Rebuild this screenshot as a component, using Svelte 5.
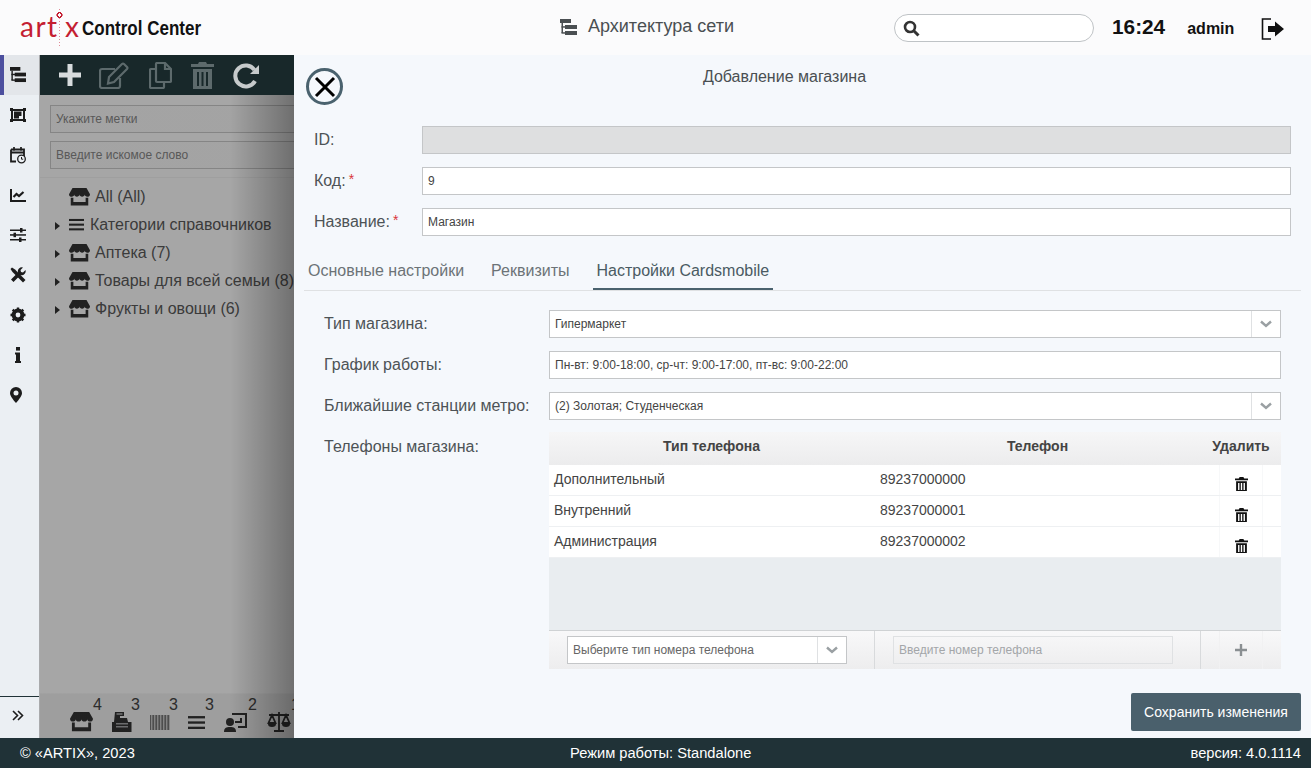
<script>
	const phones = [
		{ type: 'Дополнительный', number: '89237000000' },
		{ type: 'Внутренний', number: '89237000001' },
		{ type: 'Администрация', number: '89237000002' }
	];
	const tree = [
		{ label: 'Категории справочников', icon: 'list' },
		{ label: 'Аптека (7)', icon: 'store' },
		{ label: 'Товары для всей семьи (8)', icon: 'store' },
		{ label: 'Фрукты и овощи (6)', icon: 'store' }
	];
</script>

{#snippet store(w)}
	<svg class="ico" width={w} viewBox="0 0 24 20" fill="currentColor">
		<path d="M4 0h16l4 7c0 2-1.500 3-3 3s-3-1-3-2.500C18 9 16.500 10 15 10s-3-1-3-2.500C12 9 10.500 10 9 10S6 9 6 7.500C6 9 4.500 10 3 10S0 9 0 7z" />
		<path d="M2 11h3v5h14v-5h3v9H2z" />
	</svg>
{/snippet}

{#snippet bars(w)}
	<svg class="ico" width={w} viewBox="0 0 16 14" fill="currentColor">
		<rect y="1" width="16" height="2.200" /><rect y="6" width="16" height="2.200" /><rect y="11" width="16" height="2.200" />
	</svg>
{/snippet}

{#snippet trash(w)}
	<svg class="ico" width={w} viewBox="0 0 14 16" fill="currentColor">
		<path d="M5 0h4l1 1.500h4V3.500H0V1.500h4z" />
		<path d="M1.200 4.500h11.600V16H1.200zM3.300 6.500v7.500h1.500V6.500zM6.250 6.500v7.500h1.500V6.500zM9.200 6.500v7.500h1.500V6.500z" fill-rule="evenodd" />
	</svg>
{/snippet}

{#snippet chevron()}
	<svg width="12" height="8" viewBox="0 0 12 8" fill="none" stroke="#9aa0a3" stroke-width="2.400"><path d="M1 1.500l5 4.500 5-4.500" /></svg>
{/snippet}

{#snippet arch(w)}
	<svg class="ico" width={w} viewBox="0 0 17 16" fill="currentColor">
		<rect x="0" y="0" width="11" height="4" /><rect x="5" y="6" width="12" height="4" /><rect x="5" y="12" width="12" height="4" />
		<rect x="1.500" y="4" width="1.500" height="10" /><rect x="1.500" y="7.200" width="4" height="1.500" /><rect x="1.500" y="13.200" width="4" height="1.500" />
	</svg>
{/snippet}

<div class="app">
	<header class="topbar">
		<div class="brand">
			<div class="logo">
				<span class="logo-art">art</span>
				<span class="logo-i"></span>
				<span class="logo-x">x</span>
			</div>
			<div class="brand-name">Control Center</div>
		</div>
		<div class="page-title">
			{@render arch(17)}
			<span>Архитектура сети</span>
		</div>
		<div class="top-right">
			<div class="search">
				<svg width="17" height="17" viewBox="0 0 17 17" fill="none" stroke="#333" stroke-width="2.600"><circle cx="7" cy="7" r="5" /><path d="M10.500 10.500l5 5" stroke-width="3" /></svg>
			</div>
			<div class="clock">16:24</div>
			<div class="user">admin</div>
			<svg class="logout" width="24" height="22" viewBox="0 0 24 22"><path d="M10 1H1.500v20H10" fill="none" stroke="#111" stroke-width="1.600" /><path d="M7 8h7V3.500l9 7.500-9 7.500V14H7z" fill="#111" /></svg>
		</div>
	</header>

	<div class="middle">
		<nav class="sidebar">
			<div class="nav-item active">{@render arch(16)}</div>
			<div class="nav-item">
				<svg width="16" height="14" viewBox="0 0 16 14" fill="#1c1c1c"><path d="M0 0h3v1h10V0h3v3h-1v8h1v3h-3v-1H3v1H0v-3h1V3H0zM3 3v8h10V3zM4 3.500h7.500V8H9v2.500H4z" fill-rule="evenodd" /></svg>
			</div>
			<div class="nav-item">
				<svg width="16" height="17" viewBox="0 0 16 17" fill="none" stroke="#1c1c1c"><path d="M1 5.500h13M1 2.500h13v7M6 14.500H1V2.500" stroke-width="1.800" /><path d="M4 0v3.500M11 0v3.500" stroke-width="1.700" /><circle cx="11.500" cy="12" r="3.800" fill="#ebeff3" stroke-width="1.300" /><path d="M11.500 10v2.200h1.700" stroke-width="1" /></svg>
			</div>
			<div class="nav-item">
				<svg width="16" height="13" viewBox="0 0 16 13" fill="none" stroke="#1c1c1c" stroke-width="2"><path d="M1 0v12h15" /><path d="M3.500 8l3-3 2.500 2 4.500-4" stroke-width="2.200" /></svg>
			</div>
			<div class="nav-item">
				<svg width="16" height="14" viewBox="0 0 16 14" fill="#1c1c1c"><rect y="1.500" width="16" height="1.500" /><rect y="6.200" width="16" height="1.500" /><rect y="11" width="16" height="1.500" /><rect x="10" width="2.500" height="4.500" /><rect x="3.500" y="4.700" width="2.500" height="4.500" /><rect x="9" y="9.500" width="2.500" height="4.500" /></svg>
			</div>
			<div class="nav-item">
				<svg width="16" height="16" viewBox="0 0 16 16" fill="#1c1c1c"><path d="M0.500 2L2 0.500l3 2 8 8 2.500 2.500-2.500 2.500-2.500-2.500-8-8z" /><path d="M1 12.500L8 5.500a4 4 0 0 1 1-4 4 4 0 0 1 4-1l-2.500 2.500 0.500 2 2 0.500L15.500 3a4 4 0 0 1-1 4 4 4 0 0 1-4 1L3.500 15z" /></svg>
			</div>
			<div class="nav-item">
				<svg width="16" height="16" viewBox="0 0 16 16"><circle cx="8" cy="8" r="4.800" fill="none" stroke="#1c1c1c" stroke-width="3.200" /><path d="M8 0.500v15M0.500 8h15M2.700 2.700l10.600 10.600M13.300 2.700L2.700 13.300" stroke="#1c1c1c" stroke-width="2.400" /><circle cx="8" cy="8" r="2.400" fill="#ebeff3" /></svg>
			</div>
			<div class="nav-item">
				<svg class="info" width="6" height="16" viewBox="0 0 6 16" fill="#1c1c1c"><rect x="1" width="4" height="3.600" /><path d="M0 5.500h5V14h1v2H0v-2h1V7.500H0z" /></svg>
			</div>
			<div class="nav-item">
				<svg width="12" height="16" viewBox="0 0 12 16"><path d="M6 0a6 6 0 0 1 6 6c0 3-3 6.500-6 10C3 12.500 0 9 0 6a6 6 0 0 1 6-6zm0 3.500a2.500 2.500 0 1 0 0 5 2.500 2.500 0 0 0 0-5z" fill="#1c1c1c" fill-rule="evenodd" /></svg>
			</div>
			<div class="nav-spacer"></div>
			<div class="nav-expand">
				<svg width="12" height="11" viewBox="0 0 12 11" fill="none" stroke="#1c1c1c" stroke-width="1.600"><path d="M1 1l4.500 4.500L1 10M6 1l4.500 4.500L6 10" /></svg>
			</div>
		</nav>

		<main class="workspace">
			<div class="toolbar">
				<svg width="24" height="24" viewBox="0 0 24 24" fill="#d8dcdd"><path d="M9.500 1h5v8.500H23v5h-8.500V23h-5v-8.500H1v-5h8.500z" /></svg>
				<svg class="edit" width="30" height="27" viewBox="0 0 30 27" fill="none" stroke="#5d6a6c" stroke-width="2.200"><path d="M21 16v8a2 2 0 0 1-2 2H3a2 2 0 0 1-2-2V9a2 2 0 0 1 2-2h13" /><path d="M10 15L23 2a1.500 1.500 0 0 1 2 0l3 3a1.500 1.500 0 0 1 0 2L15 20l-6 1.500z" /></svg>
				<svg width="23" height="27" viewBox="0 0 23 27" fill="none" stroke="#5d6a6c" stroke-width="2.200"><path d="M7 2a1 1 0 0 1 1-1h8l6 6v12a1 1 0 0 1-1 1H8a1 1 0 0 1-1-1z" /><path d="M16 1v6h6" /><path d="M7 7H2a1 1 0 0 0-1 1v17a1 1 0 0 0 1 1h12a1 1 0 0 0 1-1v-5" /></svg>
				<svg class="tight" width="23" height="27" viewBox="0 0 23 27" fill="#5d6a6c"><path d="M8 0h7l1 2h7v3H0V2h7z" /><path d="M2 7h19v20H2zM6 10v14h2V10zM10.500 10v14h2V10zM15 10v14h2V10z" fill-rule="evenodd" /></svg>
				<svg class="tight" width="27" height="27" viewBox="0 0 27 27" fill="none" stroke="#c6cacb" stroke-width="4"><path d="M22 19a10.500 10.500 0 1 1-.5-11" /><path d="M26 3v9h-9z" fill="#c6cacb" stroke="none" /></svg>
			</div>

			<div class="filters">
				<div class="filter">Укажите метки</div>
				<div class="filter">Введите искомое слово</div>
			</div>

			<ul class="tree">
				<li class="no-arrow"><span class="store-icon">{@render store(21)}</span><span>All (All)</span></li>
				{#each tree as item}
					<li>
						<span class="arrow"></span>
						{#if item.icon === 'list'}
							<span class="list-icon">{@render bars(15)}</span>
						{:else}
							<span class="store-icon">{@render store(21)}</span>
						{/if}
						<span>{item.label}</span>
					</li>
				{/each}
			</ul>

			<div class="dock">
				<div class="dock-item d-store">{@render store(23)}<sup>4</sup></div>
				<div class="dock-item d-till">
					<svg class="ico" width="20" height="20" viewBox="0 0 20 20" fill="currentColor"><path d="M3 0h9v4H8v2h7l1 4h3.500v10H0V10h2zM4.500 1.500v1h6v-1z" fill-rule="evenodd" /><path d="M4 11h12v1.500H4zM4 14h12v1.500H4z" fill="#a5a6a8" /></svg>
					<sup>3</sup>
				</div>
				<div class="dock-item d-code">
					<div class="barcode"></div>
					<sup>3</sup>
				</div>
				<div class="dock-item d-list">{@render bars(17)}<sup>3</sup></div>
				<div class="dock-item d-user">
					<svg class="ico" width="24" height="20" viewBox="0 0 24 20" fill="currentColor"><circle cx="6" cy="10" r="4" /><path d="M0 20c0-4 2-5 6-5s6 1 6 5z" /><path d="M8 1h15v15H14v-2h7V3H8z" /><path d="M11 9h5V6h2v5h-7z" /></svg>
					<sup>2</sup>
				</div>
				<div class="dock-item d-scale">
					<svg class="ico" width="24" height="20" viewBox="0 0 24 20" fill="none" stroke="currentColor" stroke-width="1.800"><path d="M12 0v18M7 19h10M2 3h20" /><path d="M5 3L1.500 11h7zM19 3l-3.500 8h7z" /><path d="M1 12a4 3 0 0 0 8 0zM15 12a4 3 0 0 0 8 0z" fill="currentColor" stroke="none" /></svg>
					<sup>1</sup>
				</div>
			</div>

			<div class="shade"></div>

			<section class="panel">
				<div class="panel-head">
					<div class="close">
						<svg width="22" height="22" viewBox="0 0 22 22" stroke="#000" stroke-width="3"><path d="M2 2l18 18M20 2L2 20" /></svg>
					</div>
					<div class="panel-title">Добавление магазина</div>
				</div>

				<div class="form-top">
					<div class="row">
						<div class="label">ID:</div>
						<input class="field disabled" disabled />
					</div>
					<div class="row">
						<div class="label">Код:<b>*</b></div>
						<div class="field">9</div>
					</div>
					<div class="row">
						<div class="label">Название:<b>*</b></div>
						<div class="field">Магазин</div>
					</div>
				</div>

				<div class="tabs">
					<div class="tab">Основные настройки</div>
					<div class="tab">Реквизиты</div>
					<div class="tab active">Настройки Cardsmobile</div>
				</div>

				<div class="tab-body">
					<div class="row">
						<div class="label wide">Тип магазина:</div>
						<div class="field select"><span>Гипермаркет</span><i>{@render chevron()}</i></div>
					</div>
					<div class="row">
						<div class="label wide">График работы:</div>
						<div class="field">Пн-вт: 9:00-18:00, ср-чт: 9:00-17:00, пт-вс: 9:00-22:00</div>
					</div>
					<div class="row">
						<div class="label wide">Ближайшие станции метро:</div>
						<div class="field select"><span>(2) Золотая; Студенческая</span><i>{@render chevron()}</i></div>
					</div>
					<div class="row top">
						<div class="label wide phones-label">Телефоны магазина:</div>
						<div class="phones">
							<div class="phones-head">
								<div class="c1">Тип телефона</div>
								<div class="c2">Телефон</div>
								<div class="c3">Удалить</div>
							</div>
							{#each phones as phone}
								<div class="phone-row">
									<div class="c1">{phone.type}</div>
									<div class="c2">{phone.number}</div>
									<div class="c3"><span class="trash-cell">{@render trash(13)}</span></div>
								</div>
							{/each}
							<div class="phones-empty"></div>
							<div class="phones-add">
								<div class="c1">
									<div class="field select small"><span>Выберите тип номера телефона</span><i>{@render chevron()}</i></div>
								</div>
								<div class="c2">
									<div class="field small ghost">Введите номер телефона</div>
								</div>
								<div class="c3">
									<span class="plus-cell">
										<svg width="12" height="12" viewBox="0 0 12 12" fill="#8a8f92"><path d="M4.800 0h2.400v4.800H12v2.400H7.200V12H4.800V7.200H0V4.800h4.800z" /></svg>
									</span>
								</div>
							</div>
						</div>
					</div>
				</div>

				<div class="panel-foot">
					<button class="save">Сохранить изменения</button>
				</div>
			</section>
		</main>
	</div>

	<footer class="footer">
		<div>© «ARTIX», 2023</div>
		<div class="mode">Режим работы: Standalone</div>
		<div>версия: 4.0.1114</div>
	</footer>
</div>

<style>
	:global(body) {
		margin: 0;
		font-family: "Liberation Sans", Arial, sans-serif;
		overflow: hidden;
	}

	.app {
		height: 100vh;
		display: flex;
		flex-direction: column;
		color: #333;
	}

	.ico {
		display: block;
		height: auto;
	}

	/* header */
	.topbar {
		height: 55px;
		flex: none;
		background: #fbfbfc;
		display: flex;
		align-items: center;
	}

	.brand {
		display: flex;
		align-items: center;
		padding-left: 20px;
		width: 560px;
		box-sizing: border-box;
	}

	.logo {
		display: flex;
		align-items: center;
		color: #c41e32;
		font-family: Lato, sans-serif;
		font-weight: 400;
		font-size: 28px;
		line-height: 1;
		height: 40px;
		width: 56px;
		flex: none;
		margin-top: 1px;
	}

	.logo-art {
		letter-spacing: 1.500px;
		width: 35px;
		flex: none;
		margin-top: -5px;
	}

	.logo-x {
		margin-top: -5px;
	}

	.logo-i {
		width: 7px;
		height: 38px;
		margin: 0 2px 0 1px;
		flex: none;
		background:
			radial-gradient(circle at 50% 6px, #fbfbfc 0 1.500px, #c41e32 1.600px 3px, transparent 3.100px),
			repeating-linear-gradient(#e08a96 0 1px, transparent 1px 3px) center / 1px 100% no-repeat;
	}

	.brand-name {
		font-weight: bold;
		font-size: 21px;
		color: #111;
		margin-left: 6px;
		white-space: nowrap;
		transform: scaleX(0.81);
		transform-origin: left center;
	}

	.page-title {
		display: flex;
		align-items: center;
		gap: 11px;
		font-size: 18px;
		color: #4a4f52;
		width: 334px;
		margin-top: -2px;
	}

	.page-title span {
		white-space: nowrap;
	}

	.top-right {
		display: flex;
		align-items: center;
		flex: 1;
	}

	.search {
		width: 200px;
		height: 28px;
		box-sizing: border-box;
		border: 1px solid #bfc3c6;
		border-radius: 14px;
		background: #fff;
		display: flex;
		align-items: center;
		padding-left: 8px;
		margin-top: 1px;
	}

	.clock {
		font-weight: bold;
		font-size: 20.800px;
		color: #111;
		margin-left: 18px;
		margin-top: -2px;
	}

	.user {
		font-weight: bold;
		font-size: 16px;
		color: #111;
		margin-left: 22px;
		margin-top: 3px;
	}

	.logout {
		margin-left: 27px;
		margin-top: 3px;
	}

	/* middle */
	.middle {
		flex: 1;
		min-height: 0;
		display: flex;
	}

	.sidebar {
		width: 40px;
		flex: none;
		background: #ebeff3;
		border-right: 1px solid #a9aaac;
		box-sizing: border-box;
		display: flex;
		flex-direction: column;
	}

	.nav-item {
		height: 40px;
		flex: none;
		display: flex;
		align-items: center;
		padding-left: 6px;
		color: #1c1c1c;
		box-sizing: border-box;
		border-left: 4px solid transparent;
	}

	.nav-item.active {
		border-left-color: #4c4f9e;
		background: #e3e6ea;
	}

	.info {
		margin-left: 5px;
	}

	.nav-spacer {
		flex: 1;
	}

	.nav-expand {
		height: 42px;
		flex: none;
		border-top: 1px solid #203237;
		width: 39px;
		display: flex;
		align-items: center;
		padding: 0 0 4px 12px;
		box-sizing: border-box;
	}

	.workspace {
		flex: 1;
		min-width: 0;
		position: relative;
		overflow: hidden;
		background: #fff;
		display: flex;
		flex-direction: column;
		white-space: nowrap;
	}

	.toolbar {
		height: 40px;
		flex: none;
		background: #18282a;
		display: flex;
		align-items: center;
		gap: 20px;
		padding-left: 18px;
		position: relative;
		z-index: 2;
	}

	.edit {
		margin-left: -3px;
	}

	.tight {
		margin-left: -1px;
	}

	.filters {
		padding: 10px 10px 8px;
		display: flex;
		flex-direction: column;
		gap: 8px;
		background: #fff;
		border-bottom: 1px solid #f4f4f4;
	}

	.filter {
		height: 28px;
		width: 700px;
		box-sizing: border-box;
		border: 1px solid #ccc;
		background: #fbfbfb;
		color: #888;
		font-size: 12px;
		display: flex;
		align-items: center;
		padding-left: 5px;
	}

	.tree {
		list-style: none;
		margin: 0;
		padding: 5px 0 0 15px;
		flex: 1;
		font-size: 16px;
		color: #5a5a5a;
	}

	.tree li {
		height: 28px;
		display: flex;
		align-items: center;
	}

	.no-arrow {
		padding-left: 14px;
	}

	.arrow {
		width: 0;
		height: 0;
		border-left: 5px solid #333;
		border-top: 4.500px solid transparent;
		border-bottom: 4.500px solid transparent;
		margin: 2px 9px 0 0;
	}

	.store-icon {
		margin-right: 5px;
		color: #333;
	}

	.list-icon {
		margin-right: 6px;
		color: #333;
	}

	.dock {
		height: 45px;
		flex: none;
		background: #f2f2f2;
		border-top: 1px solid #f8f8f8;
		display: flex;
		align-items: flex-end;
		padding: 0 0 6px 30px;
		color: #333;
		box-sizing: border-box;
	}

	.dock-item {
		position: relative;
		height: 20px;
		flex: none;
		display: flex;
		align-items: center;
	}

	.dock-item sup {
		position: absolute;
		top: -15px;
		font-size: 16px;
		line-height: 1;
		color: #444;
	}

	.d-store { width: 42px; }
	.d-store sup { left: 23px; }
	.d-till { width: 38px; }
	.d-till sup { left: 19px; }
	.d-code { width: 38px; }
	.d-code sup { left: 19px; }
	.d-list { width: 36px; }
	.d-list sup { left: 17px; }
	.d-user { width: 43px; }
	.d-user sup { left: 24px; }
	.d-scale { width: 30px; }
	.d-scale sup { left: 24px; }

	.barcode {
		width: 20px;
		height: 15px;
		background: repeating-linear-gradient(90deg, #777 0 1px, #c9c9c9 1px 2px, #999 2px 3px);
	}

	.shade {
		position: absolute;
		inset: 0;
		z-index: 1;
		background: linear-gradient(90deg, rgba(0, 0, 0, 0.35) 0, rgba(0, 0, 0, 0.35) 190px, rgba(0, 0, 0, 0.56) 254px);
	}

	/* slide-over panel */
	.panel {
		position: absolute;
		left: 254px;
		top: 0;
		right: 0;
		bottom: 0;
		z-index: 3;
		background: #f5f8fc;
		display: flex;
		flex-direction: column;
		padding: 0 10px;
		box-sizing: border-box;
		white-space: normal;
	}

	.panel-head {
		height: 71px;
		flex: none;
		display: flex;
		padding-top: 13px;
		box-sizing: border-box;
	}

	.close {
		width: 37px;
		height: 37px;
		flex: none;
		box-sizing: border-box;
		border: 3px solid #4a626e;
		border-radius: 50%;
		margin-left: 2px;
		display: flex;
		align-items: center;
		justify-content: center;
	}

	.panel-title {
		flex: 1;
		text-align: center;
		font-size: 16px;
		color: #4a4f52;
		margin-left: -75px;
		line-height: 18px;
	}

	.form-top {
		display: flex;
		flex-direction: column;
		gap: 13px;
		padding: 0 10px;
	}

	.row {
		display: flex;
		align-items: center;
	}

	.row.top {
		align-items: flex-start;
	}

	.label {
		width: 108px;
		flex: none;
		font-size: 16px;
		color: #4d5356;
	}

	.label b {
		color: #d9343a;
		font-weight: normal;
		font-size: 14px;
		margin-left: 3px;
		position: relative;
		top: -2px;
	}

	.label.wide {
		width: 225px;
	}

	.phones-label {
		padding-top: 5px;
	}

	.field {
		flex: 1;
		min-width: 0;
		height: 28px;
		box-sizing: border-box;
		background: #fff;
		border: 1px solid #c4c6c8;
		font-size: 12px;
		color: #444;
		display: flex;
		align-items: center;
		padding: 0 5px;
		font-family: inherit;
		white-space: nowrap;
	}

	.field.disabled {
		background: #dedfe0;
	}

	.select {
		padding-right: 0;
		justify-content: space-between;
	}

	.select i {
		width: 28px;
		height: 100%;
		flex: none;
		border-left: 1px solid #dfe1e3;
		display: flex;
		align-items: center;
		justify-content: center;
	}

	.tabs {
		display: flex;
		gap: 19px;
		margin-top: 18px;
		height: 36px;
		flex: none;
		border-bottom: 1px solid #dfe1e3;
	}

	.tab {
		padding: 0 4px;
		font-size: 16px;
		color: #6c7377;
		height: 36px;
		box-sizing: border-box;
		line-height: 33px;
		white-space: nowrap;
	}

	.tab.active {
		color: #4a5b63;
		border-bottom: 2px solid #4a626e;
	}

	.tab-body {
		display: flex;
		flex-direction: column;
		gap: 13px;
		padding: 19px 20px 0;
	}

	.phones {
		flex: 1;
		min-width: 0;
		margin-top: -1px;
		font-size: 14px;
	}

	.phones-head,
	.phone-row,
	.phones-add {
		display: grid;
		grid-template-columns: 325px 327px 80px;
	}

	.phones-head {
		height: 33px;
		align-items: center;
		text-align: center;
		font-weight: bold;
		color: #444;
		background: linear-gradient(#f6f6f7, #ececed);
		padding-bottom: 6px;
		box-sizing: border-box;
	}

	.phone-row {
		height: 31px;
		background: #fff;
		border-bottom: 1px solid #eef0f2;
		box-sizing: border-box;
		color: #444;
	}

	.phone-row .c1 {
		padding: 6px 0 0 5px;
	}

	.phone-row .c2 {
		padding: 6px 0 0 6px;
	}

	.phone-row .c3,
	.phones-add .c3 {
		display: flex;
		justify-content: center;
	}

	.trash-cell,
	.plus-cell {
		width: 44px;
		height: 100%;
		display: flex;
		align-items: center;
		justify-content: center;
		border-left: 1px solid #f7f8f9;
		border-right: 1px solid #f7f8f9;
		color: #111;
		box-sizing: border-box;
	}

	.trash-cell {
		padding-top: 8px;
	}

	.plus-cell {
		border-color: #f1f1f2;
	}

	.phones-empty {
		height: 72px;
		background: #e9edf0;
		border-bottom: 1px solid #cfd2d4;
		box-sizing: content-box;
	}

	.phones-add {
		height: 38px;
		background: linear-gradient(#f8f8f9, #ededee);
		box-sizing: border-box;
		align-items: center;
	}

	.phones-add .c1 {
		padding: 0 27px 0 18px;
		height: 100%;
		display: flex;
		align-items: center;
		box-sizing: border-box;
	}

	.phones-add .c2 {
		padding: 0 27px 0 18px;
		height: 100%;
		display: flex;
		align-items: center;
		border-left: 1px solid #d8dadc;
		border-right: 1px solid #d8dadc;
		box-sizing: border-box;
	}

	.phones-add .c3 {
		height: 100%;
		align-items: center;
	}

	.field.small {
		color: #666;
	}

	.field.ghost {
		background: transparent;
		border-color: #dfe1e3;
		color: #a3a6a9;
	}

	.panel-foot {
		margin-top: auto;
		display: flex;
		justify-content: flex-end;
		padding-bottom: 7px;
	}

	.save {
		width: 170px;
		height: 38px;
		border: none;
		border-radius: 2px;
		background: #4a606c;
		color: #fff;
		font-family: inherit;
		font-size: 14px;
	}

	/* footer */
	.footer {
		height: 30px;
		flex: none;
		background: #203237;
		color: #fff;
		font-size: 14.667px;
		display: flex;
		align-items: center;
		justify-content: space-between;
		padding: 0 10px 0 20px;
	}

	.mode {
		margin-right: 4px;
	}
</style>
